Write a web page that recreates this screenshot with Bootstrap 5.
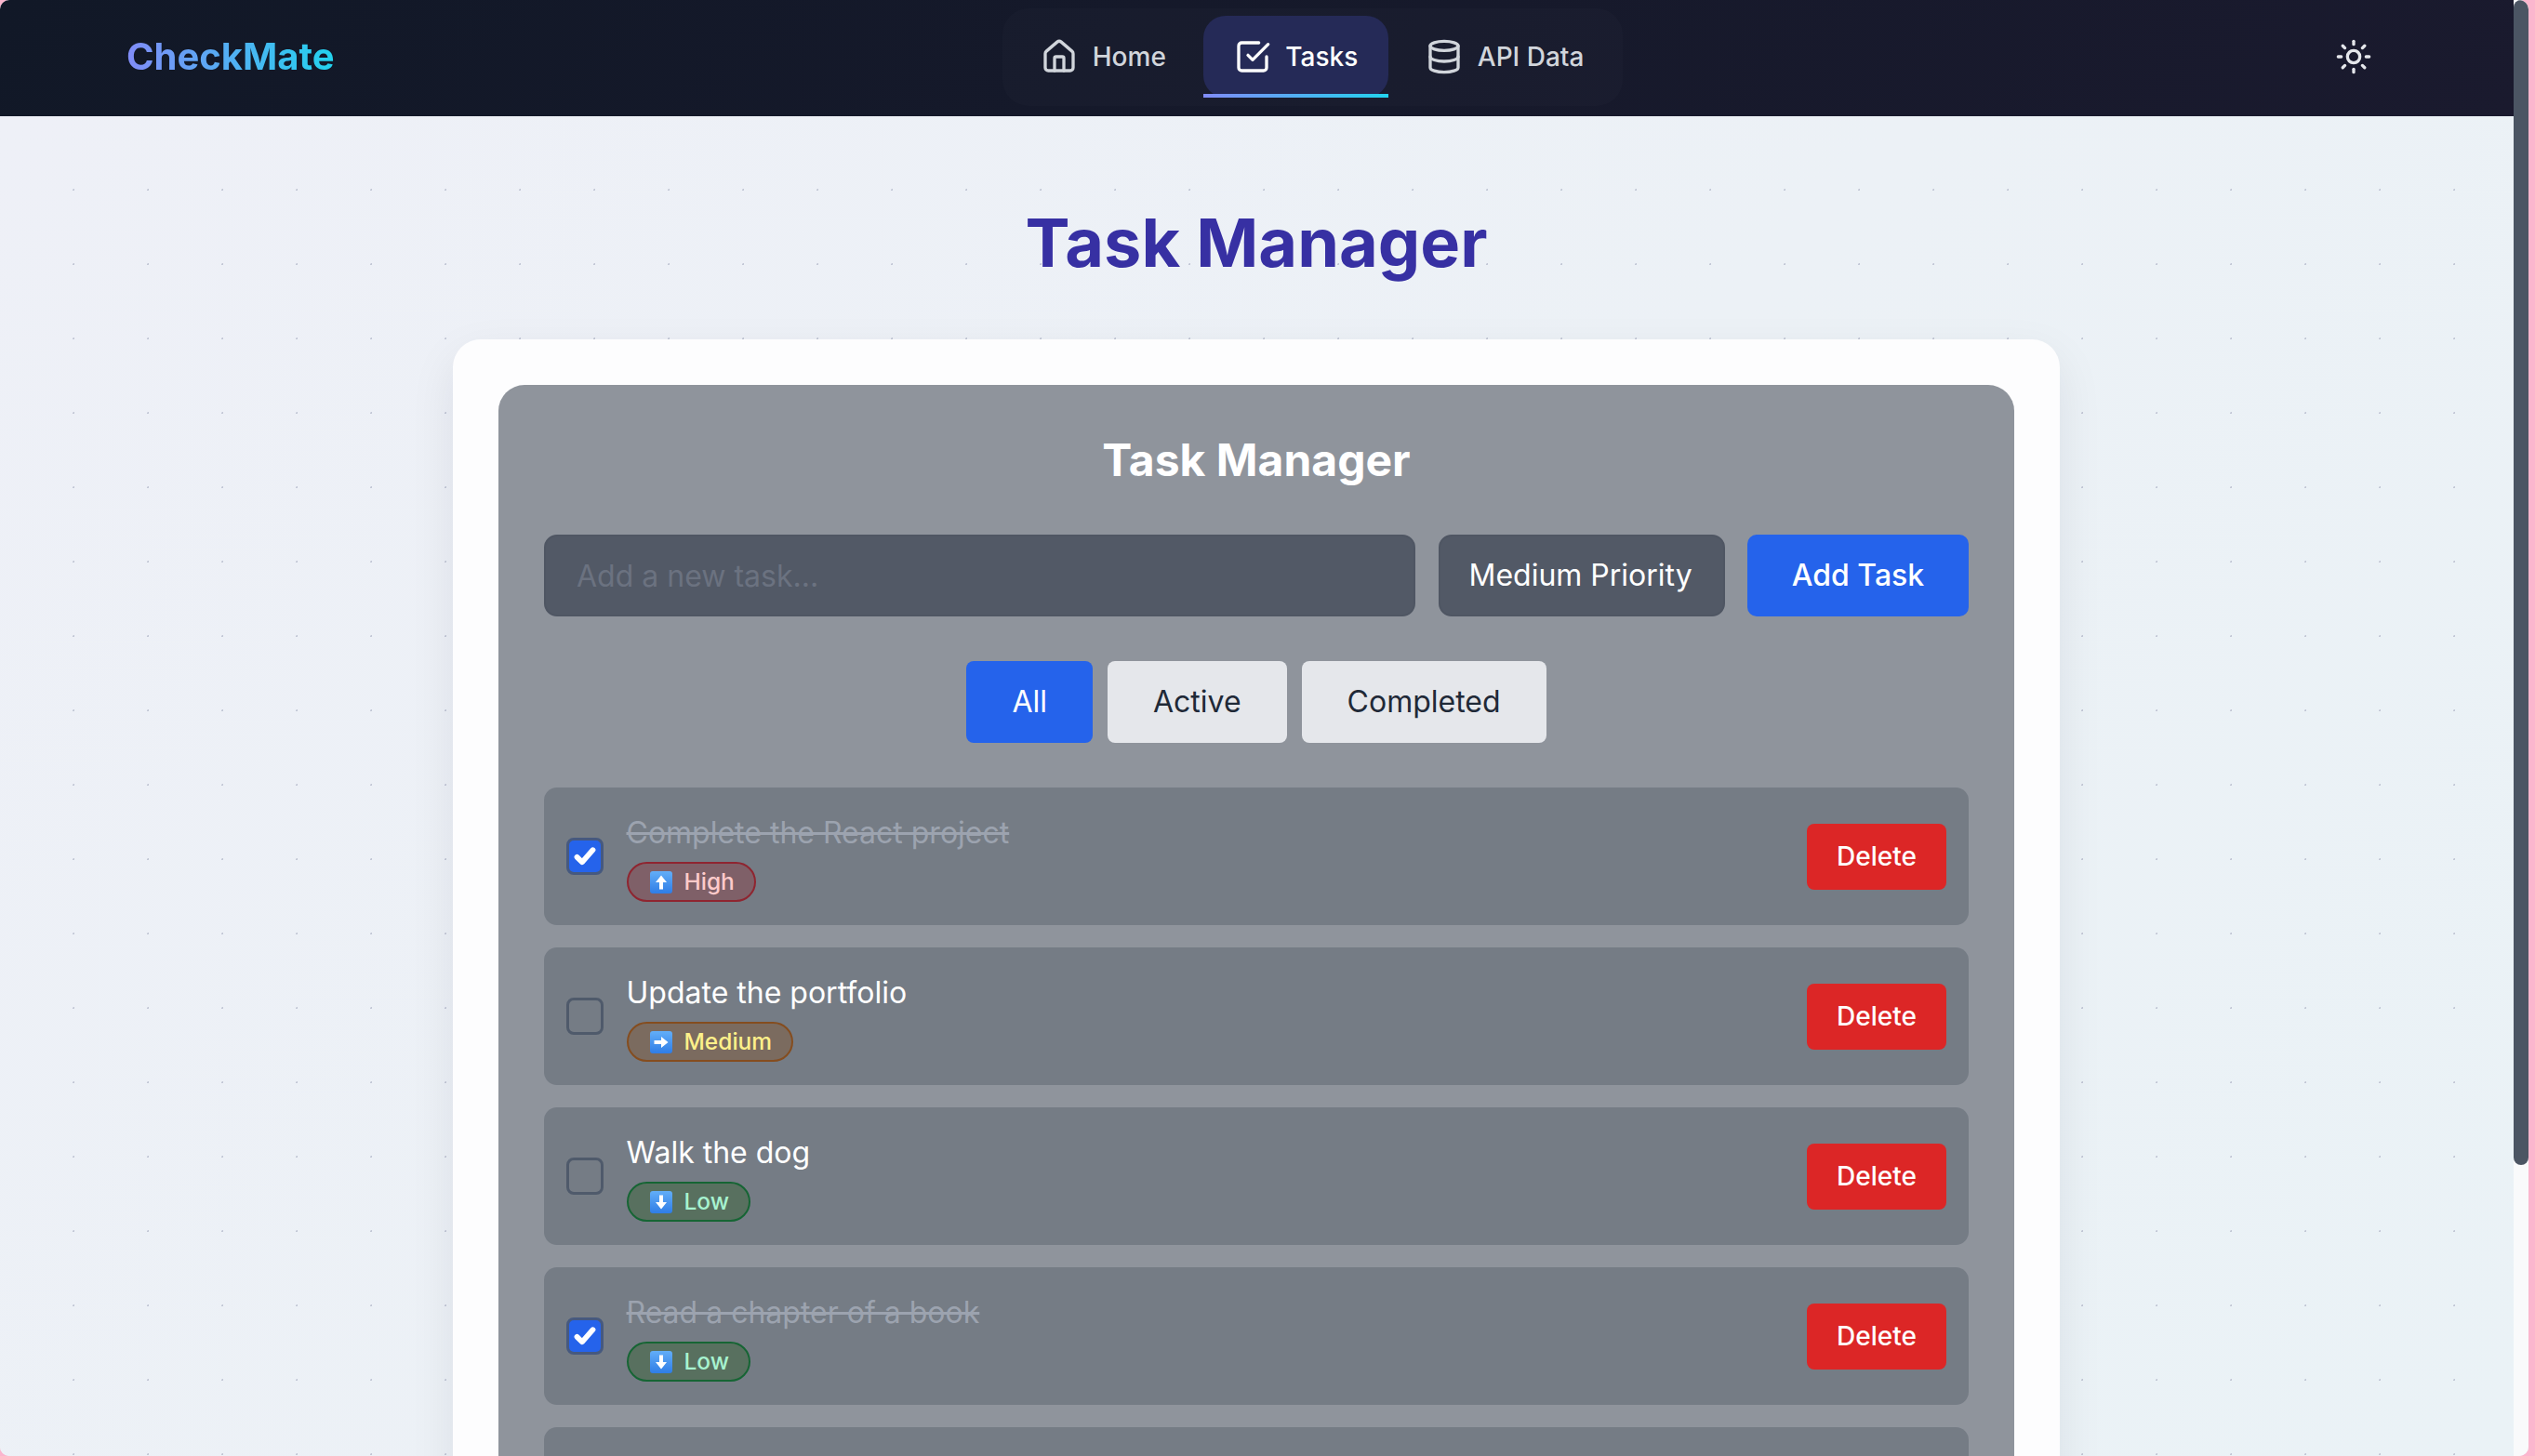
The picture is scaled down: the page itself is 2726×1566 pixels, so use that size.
<!DOCTYPE html>
<html lang="en">
  <head>
    <meta charset="UTF-8" />
    <title>CheckMate - Task Manager</title>
    <link href="https://cdn.jsdelivr.net/npm/bootstrap@5.3.0/dist/css/bootstrap.min.css" rel="stylesheet" />
    <style>
      html, body { height: 100%; }
      body {
        margin: 0;
        overflow: hidden;
        background: #fbb6ce;
        font-family: Inter, "Liberation Sans", sans-serif;
      }
      .app-frame {
        width: 2719px;
        height: 1566px;
        border-radius: 10px;
        overflow: hidden;
        background: #eef1f7;
      }
      .app-view {
        width: 2703px;
        height: 1566px;
        overflow: hidden;
      }
      .scroll-track {
        width: 16px;
        background: #f9fafb;
      }
      .scroll-thumb {
        height: 1253px;
        border-radius: 8px;
        background: #4b5563;
      }

      .top-bar {
        height: 125px;
        padding: 0 136px 3px;
        background: linear-gradient(135deg, #111827, #1a1a2e);
      }
      .brand-text {
        font-size: 40px;
        font-weight: 700;
        background: linear-gradient(90deg, #818cf8, #22d3ee);
        -webkit-background-clip: text;
        background-clip: text;
        color: transparent;
      }
      .nav-group {
        height: 105px;
        padding: 0 8.5px;
        gap: 7px;
        border-radius: 28px;
        background: rgba(255, 255, 255, 0.015);
      }
      .nav-group .nav-link {
        position: relative;
        height: 88px;
        padding: 0 33px;
        gap: 15.5px;
        border-radius: 24px;
        color: #d1d5db;
        font-size: 28px;
        font-weight: 500;
      }
      .nav-group .nav-link.active-tab {
        color: #fff;
        background: #252a57;
      }
      .nav-group .nav-link.active-tab::after {
        content: "";
        position: absolute;
        left: 0;
        right: 0;
        bottom: 0;
        height: 4px;
        background: linear-gradient(90deg, #818cf8, #22d3ee);
      }
      .line-icon {
        width: 40px;
        height: 40px;
        flex: none;
        fill: none;
        stroke: currentColor;
        stroke-width: 2;
        stroke-linecap: round;
        stroke-linejoin: round;
      }
      .theme-btn {
        width: 104px;
        padding: 0 16px 0 0;
        border: 0;
        color: #e5e7eb;
        background: none;
        line-height: 1;
        text-align: right;
      }

      .page-main {
        min-height: 1441px;
        padding-right: 1px;
        background-color: transparent;
        background-image:
          radial-gradient(circle at 79.5px 79.5px, #c3c8d6 1px, transparent 1.8px),
          linear-gradient(135deg, #eef0f7, #ecf1f6 50%, #eaf2f6);
        background-size: 80px 80px, 100% 1441px;
      }
      .page-title {
        margin: 0;
        padding-top: 92px;
        height: 240px;
        font-size: 72px;
        line-height: 88px;
        font-weight: 700;
        text-align: center;
        color: #3730a3;
      }
      .outer-panel {
        width: 1728px;
        min-height: 1500px;
        margin: 0 auto;
        padding: 49px;
        border: 0;
        border-radius: 30px;
        background: #fdfdfe;
        box-shadow: 0 18px 50px rgba(15, 23, 42, 0.08);
      }
      .inner-panel {
        padding: 49px;
        border-radius: 28px;
        background: #8f949c;
      }
      .inner-title {
        margin: 0 0 49px;
        height: 63px;
        font-size: 48px;
        line-height: 63px;
        font-weight: 700;
        text-align: center;
        color: #fff;
      }
      .add-row { gap: 24.5px; }
      .task-input.form-control {
        height: 88px;
        flex: 1;
        padding: 0 33px;
        border: 2px solid #4f5663;
        border-radius: 14px;
        font-size: 32px;
        color: #fff;
        background: #525966;
      }
      .task-input.form-control::placeholder { color: #6b7280; }
      .priority-select.form-select {
        width: 308px;
        height: 88px;
        padding: 0 0 0 31px;
        border: 2px solid #4f5663;
        border-radius: 14px;
        font-size: 32px;
        color: #fff;
        background: #525966;
      }
      .add-btn.btn {
        width: 238px;
        height: 88px;
        padding: 0;
        border: 0;
        border-radius: 10px;
        font-size: 32px;
        font-weight: 500;
        color: #fff;
        background: #2563eb;
      }
      .filter-row {
        gap: 16px;
        margin: 48px 0;
      }
      .filter-btn.btn {
        height: 88px;
        padding: 0 49px;
        border: 0;
        border-radius: 8px;
        font-size: 32px;
        font-weight: 400;
        color: #1f2937;
        background: #e5e7eb;
      }
      .filter-btn.btn.is-on { color: #fff; background: #2563eb; }
      .task-list { gap: 24px; }
      .task-row {
        height: 148px;
        padding: 0 24px;
        gap: 24.5px;
        border-radius: 14px;
        background: #757c85;
      }
      .task-check.form-check-input {
        width: 40px;
        height: 40px;
        margin: 0;
        flex: none;
        border: 3px solid #4f5a6b;
        border-radius: 8px;
        background-color: transparent;
      }
      .task-check.form-check-input:checked {
        background-color: #2563eb;
        border-color: #46597f;
        background-image: url("data:image/svg+xml,%3csvg xmlns='http://www.w3.org/2000/svg' viewBox='0 0 20 20'%3e%3cpath fill='none' stroke='%23fff' stroke-linecap='round' stroke-linejoin='round' stroke-width='3.4' d='m5 10.5 3.2 3.2L15 6'/%3e%3c/svg%3e");
      }
      .task-name {
        height: 47px;
        font-size: 32px;
        line-height: 47px;
        color: #fff;
      }
      .task-name.is-done {
        color: #9ca3af;
        text-decoration: line-through;
      }
      .prio-pill {
        height: 43px;
        margin-top: 8px;
        padding: 0 21px 0 23px;
        gap: 13px;
        border: 2.5px solid;
        border-radius: 22px;
        font-size: 24.5px;
        font-weight: 500;
      }
      .prio-high { color: #fecaca; background: #7f6068; border-color: #8f2530; }
      .prio-med { color: #fef08a; background: #7b6b5f; border-color: #854d1f; }
      .prio-low { color: #a7f3d0; background: #58705f; border-color: #166534; }
      .arrow-icon { width: 24px; height: 24px; flex: none; }
      .del-btn.btn {
        width: 150px;
        height: 71px;
        padding: 0;
        border: 0;
        border-radius: 8px;
        font-size: 28px;
        font-weight: 500;
        color: #fff;
        background: #dc2626;
      }
    </style>
  </head>
  <body>
    <svg width="0" height="0" class="d-block position-absolute">
      <defs>
        <linearGradient id="emojiBlue" x1="0" y1="0" x2="0" y2="1">
          <stop offset="0" stop-color="#62aef8" />
          <stop offset="1" stop-color="#2f7de6" />
        </linearGradient>
      </defs>
    </svg>
    <div class="app-frame d-flex">
      <div class="app-view">
        <nav class="top-bar d-flex align-items-center justify-content-between">
          <a class="brand-text text-decoration-none" href="#">CheckMate</a>
          <div class="nav-group nav d-flex align-items-center">
            <a class="nav-link d-flex align-items-center" href="#">
              <svg class="line-icon" viewBox="0 0 24 24"><path d="M15 21v-8a1 1 0 0 0-1-1h-4a1 1 0 0 0-1 1v8" /><path d="M3 10a2 2 0 0 1 .709-1.528l7-5.999a2 2 0 0 1 2.582 0l7 5.999A2 2 0 0 1 21 10v9a2 2 0 0 1-2 2H5a2 2 0 0 1-2-2z" /></svg>
              Home
            </a>
            <a class="nav-link active-tab d-flex align-items-center" href="#">
              <svg class="line-icon" viewBox="0 0 24 24"><path d="m9 11 3 3L22 4" /><path d="M21 12v7a2 2 0 0 1-2 2H5a2 2 0 0 1-2-2V5a2 2 0 0 1 2-2h11" /></svg>
              Tasks
            </a>
            <a class="nav-link d-flex align-items-center" href="#">
              <svg class="line-icon" viewBox="0 0 24 24"><ellipse cx="12" cy="5" rx="9" ry="3" /><path d="M3 5v14a9 3 0 0 0 18 0V5" /><path d="M3 12a9 3 0 0 0 18 0" /></svg>
              API Data
            </a>
          </div>
          <button class="theme-btn" type="button" aria-label="Toggle theme">
            <svg class="line-icon" viewBox="0 0 24 24"><circle cx="12" cy="12" r="4" /><path d="M12 2v2" /><path d="M12 20v2" /><path d="m4.93 4.93 1.41 1.41" /><path d="m17.66 17.66 1.41 1.41" /><path d="M2 12h2" /><path d="M20 12h2" /><path d="m6.34 17.66-1.41 1.41" /><path d="m19.07 4.93-1.41 1.41" /></svg>
          </button>
        </nav>

        <main class="page-main">
          <h1 class="page-title">Task Manager</h1>
          <div class="outer-panel card">
            <div class="inner-panel">
              <h2 class="inner-title">Task Manager</h2>

              <form class="add-row d-flex">
                <input type="text" class="task-input form-control" placeholder="Add a new task..." />
                <select class="priority-select form-select">
                  <option>Medium Priority</option>
                </select>
                <button type="button" class="add-btn btn">Add Task</button>
              </form>

              <div class="filter-row d-flex justify-content-center">
                <button type="button" class="filter-btn btn is-on">All</button>
                <button type="button" class="filter-btn btn">Active</button>
                <button type="button" class="filter-btn btn">Completed</button>
              </div>

              <div class="task-list d-flex flex-column">
                <div class="task-row d-flex align-items-center">
                  <input class="task-check form-check-input" type="checkbox" checked />
                  <div class="flex-grow-1 d-flex flex-column align-items-start">
                    <span class="task-name is-done">Complete the React project</span>
                    <span class="prio-pill prio-high d-inline-flex align-items-center">
                      <svg class="arrow-icon" viewBox="0 0 24 24"><rect x="0" y="0" width="24" height="24" rx="3" fill="url(#emojiBlue)" /><path d="M12 4.5 18 12h-4v7.5h-4V12H6z" fill="#fff" /></svg>
                      High
                    </span>
                  </div>
                  <button type="button" class="del-btn btn">Delete</button>
                </div>

                <div class="task-row d-flex align-items-center">
                  <input class="task-check form-check-input" type="checkbox" />
                  <div class="flex-grow-1 d-flex flex-column align-items-start">
                    <span class="task-name">Update the portfolio</span>
                    <span class="prio-pill prio-med d-inline-flex align-items-center">
                      <svg class="arrow-icon" viewBox="0 0 24 24"><rect x="0" y="0" width="24" height="24" rx="3" fill="url(#emojiBlue)" /><path d="M19.5 12 12 18v-4H4.5v-4H12V6z" fill="#fff" /></svg>
                      Medium
                    </span>
                  </div>
                  <button type="button" class="del-btn btn">Delete</button>
                </div>

                <div class="task-row d-flex align-items-center">
                  <input class="task-check form-check-input" type="checkbox" />
                  <div class="flex-grow-1 d-flex flex-column align-items-start">
                    <span class="task-name">Walk the dog</span>
                    <span class="prio-pill prio-low d-inline-flex align-items-center">
                      <svg class="arrow-icon" viewBox="0 0 24 24"><rect x="0" y="0" width="24" height="24" rx="3" fill="url(#emojiBlue)" /><path d="M12 19.5 6 12h4V4.5h4V12h4z" fill="#fff" /></svg>
                      Low
                    </span>
                  </div>
                  <button type="button" class="del-btn btn">Delete</button>
                </div>

                <div class="task-row d-flex align-items-center">
                  <input class="task-check form-check-input" type="checkbox" checked />
                  <div class="flex-grow-1 d-flex flex-column align-items-start">
                    <span class="task-name is-done">Read a chapter of a book</span>
                    <span class="prio-pill prio-low d-inline-flex align-items-center">
                      <svg class="arrow-icon" viewBox="0 0 24 24"><rect x="0" y="0" width="24" height="24" rx="3" fill="url(#emojiBlue)" /><path d="M12 19.5 6 12h4V4.5h4V12h4z" fill="#fff" /></svg>
                      Low
                    </span>
                  </div>
                  <button type="button" class="del-btn btn">Delete</button>
                </div>

                <div class="task-row d-flex align-items-center"></div>
              </div>
            </div>
          </div>
        </main>
      </div>
      <div class="scroll-track" aria-hidden="true">
        <div class="scroll-thumb"></div>
      </div>
    </div>
    <script src="https://cdn.jsdelivr.net/npm/bootstrap@5.3.0/dist/js/bootstrap.bundle.min.js"></script>
  </body>
</html>
